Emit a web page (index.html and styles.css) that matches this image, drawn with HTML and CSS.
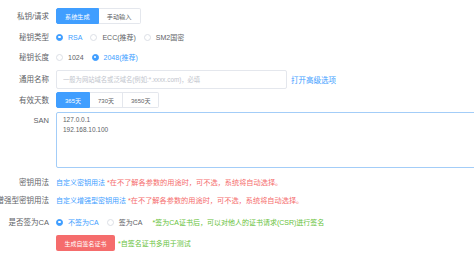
FILE: index.html
```html
<!DOCTYPE html>
<html lang="zh-CN">
<head>
    <meta charset="UTF-8">
    <meta name="viewport" content="width=device-width, initial-scale=1.0">
    <title>自签名证书</title>
    <link rel="stylesheet" href="styles.css">
</head>
<body>
    <form class="form">
        <div class="row">
            <label class="label">私钥/请求</label>
            <div class="seg-group">
                <span class="seg active">系统生成</span>
                <span class="seg">手动输入</span>
            </div>
        </div>
        <div class="row gap-5">
            <label class="label">秘钥类型</label>
            <span class="radio checked"><i></i>RSA</span>
            <span class="radio"><i></i>ECC(推荐)</span>
            <span class="radio"><i></i>SM2国密</span>
        </div>
        <div class="row gap-4">
            <label class="label">秘钥长度</label>
            <span class="radio"><i></i>1024</span>
            <span class="radio checked"><i></i>2048(推荐)</span>
        </div>
        <div class="row gap-5 tall">
            <label class="label">通用名称</label>
            <input class="input" type="text" placeholder="一般为网站域名或泛域名(例如:*.xxxx.com)，必填">
            <a class="link more" href="#">打开高级选项</a>
        </div>
        <div class="row gap-3">
            <label class="label">有效天数</label>
            <div class="seg-group days">
                <span class="seg active">365天</span>
                <span class="seg">730天</span>
                <span class="seg">3650天</span>
            </div>
        </div>
        <div class="row gap-4 top">
            <label class="label">SAN</label>
            <textarea class="textarea">127.0.0.1
192.168.10.100</textarea>
        </div>
        <div class="row gap-6">
            <label class="label">密钥用法</label>
            <span class="line"><a class="link" href="#">自定义密钥用法</a> <span class="hint-red">*在不了解各参数的用途时，可不选，系统将自动选择。</span></span>
        </div>
        <div class="row gap-2">
            <label class="label">增强型密钥用法</label>
            <span class="line"><a class="link" href="#">自定义增强型密钥用法</a> <span class="hint-red">*在不了解各参数的用途时，可不选，系统将自动选择。</span></span>
        </div>
        <div class="row gap-6">
            <label class="label">是否签为CA</label>
            <span class="radio checked"><i></i>不签为CA</span>
            <span class="radio"><i></i>签为CA</span>
            <span class="hint-green ca-hint">*签为CA证书后，可以对他人的证书请求(CSR)进行签名</span>
        </div>
        <div class="row gap-5">
            <span class="label"></span>
            <button class="btn-danger" type="button">生成自签名证书</button>
            <span class="hint-green">*自签名证书多用于测试</span>
        </div>
    </form>
</body>
</html>
```

FILE: styles.css
```css
html, body {
    margin: 0;
    padding: 0;
    overflow: hidden;
    background: #fff;
}
body {
    font-family: 'Liberation Sans', 'Noto Sans CJK SC', sans-serif;
    color: #606266;
}
.form {
    padding-top: 8px;
    width: 640px;
}
.row {
    display: flex;
    align-items: center;
    height: 16px;
    white-space: nowrap;
}
.row.tall {
    height: 19px;
}
.row.top {
    height: 56px;
    align-items: flex-start;
}
.gap-2 { margin-top: 2px; }
.gap-3 { margin-top: 3px; }
.gap-4 { margin-top: 4px; }
.gap-5 { margin-top: 5px; }
.gap-6 { margin-top: 6px; }

.label {
    flex: none;
    display: flex;
    align-items: center;
    justify-content: flex-end;
    box-sizing: border-box;
    width: 49px;
    height: 16px;
    padding-top: 1px;
    margin-right: 7px;
    font-size: 7.5px;
    line-height: 1;
    color: #606266;
    white-space: nowrap;
}
.row.top .label {
    height: 17px;
}

/* segmented buttons */
.seg-group {
    display: flex;
    height: 16px;
}
.seg {
    display: flex;
    align-items: center;
    padding: 0 8px;
    font-size: 6.2px;
    color: #606266;
    border: 1px solid #e4e7ed;
    border-left: none;
    background: #fff;
}
.seg:first-child {
    border-left: 1px solid #e4e7ed;
    border-radius: 2px 0 0 2px;
}
.seg:last-child {
    border-radius: 0 2px 2px 0;
}
.seg.active {
    background: #409eff;
    border-color: #409eff;
    color: #fff;
}
.days .seg {
    font-size: 6px;
}

/* radios */
.radio {
    display: flex;
    align-items: center;
    font-size: 7px;
    margin-right: 8px;
    color: #606266;
}
.radio i {
    width: 7px;
    height: 7px;
    box-sizing: border-box;
    border: 1px solid #dcdfe6;
    border-radius: 50%;
    margin-right: 5px;
    background: #fff;
    position: relative;
}
.radio.checked {
    color: #409eff;
}
.radio.checked i {
    background: #409eff;
    border-color: #409eff;
}
.radio.checked i::after {
    content: '';
    position: absolute;
    left: 50%;
    top: 50%;
    width: 2.4px;
    height: 2.4px;
    margin: -1.2px 0 0 -1.2px;
    border-radius: 50%;
    background: #fff;
}

.input {
    box-sizing: border-box;
    width: 231px;
    height: 19px;
    border: 1px solid #e4e7ed;
    border-radius: 2px;
    padding: 0 6px;
    font-family: inherit;
    font-size: 6.3px;
    color: #606266;
    outline: none;
}
.input::placeholder {
    color: #c0c4cc;
}
.link {
    color: #409eff;
    text-decoration: none;
    font-size: 7px;
}
.link.more {
    margin-left: 4px;
    font-size: 7.5px;
}

.textarea {
    box-sizing: border-box;
    width: 560px;
    height: 56px;
    margin: 0;
    padding: 2px 6px;
    border: 1px solid #a3cdf8;
    border-radius: 2px;
    font-family: inherit;
    font-size: 6.5px;
    line-height: 10px;
    color: #606266;
    resize: none;
    outline: none;
}

.line {
    font-size: 7px;
}
.hint-red {
    color: #f56c6c;
    font-size: 7.2px;
}
.hint-green {
    color: #67c23a;
    font-size: 7px;
}
.ca-hint {
    margin-left: 2px;
}

.btn-danger {
    height: 16px;
    padding: 0 8.5px;
    margin: 0 3px 0 0;
    border: none;
    border-radius: 2px;
    background: #f56c6c;
    color: #fff;
    font-family: inherit;
    font-size: 6px;
}
```
